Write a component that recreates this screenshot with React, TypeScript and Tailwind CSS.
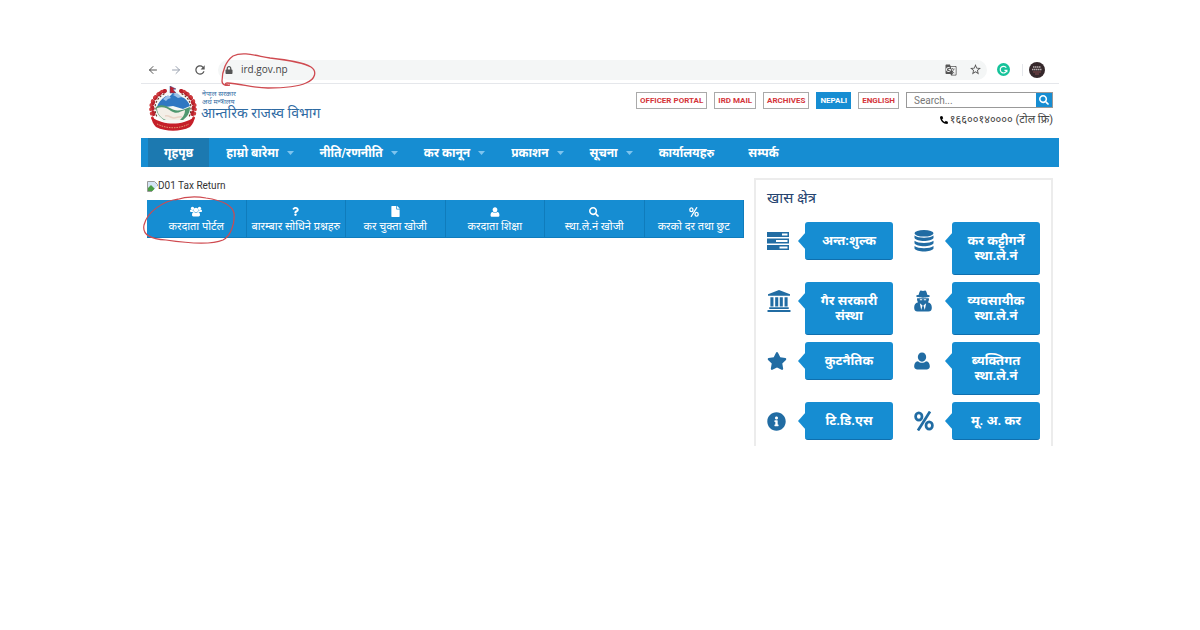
import type { ReactNode } from 'react'
import { ArrowLeft, ArrowRight } from 'lucide-react'
import { FaFile, FaInfoCircle, FaLock, FaPhoneAlt, FaQuestion, FaSearch, FaStar } from 'react-icons/fa'
import { MdGTranslate, MdRefresh, MdStarBorder } from 'react-icons/md'

const portalLinks = [
  { label: 'OFFICER PORTAL' },
  { label: 'IRD MAIL' },
  { label: 'ARCHIVES' },
  { label: 'NEPALI', active: true },
  { label: 'ENGLISH' },
]

const menu = [
  { label: 'गृहपृष्ठ', active: true },
  { label: 'हाम्रो बारेमा', children: true },
  { label: 'नीति/रणनीति', children: true },
  { label: 'कर कानून', children: true },
  { label: 'प्रकाशन', children: true },
  { label: 'सूचना', children: true },
  { label: 'कार्यालयहरु' },
  { label: 'सम्पर्क' },
]

function UserIcon({ className }: { className?: string }) {
  return (
    <svg viewBox="0 0 20 22" className={className} fill="currentColor" aria-hidden="true">
      <path d="M10 .5c3 0 5.200 2.300 5.200 5.600S13 12 10 12 4.800 9.400 4.800 6.100 7 .5 10 .5z" />
      <path d="M5 11.200c3 2.700 7 2.700 10 0 3.500.4 4.800 3.300 4.800 6.800 0 2-1.300 3.500-3.500 3.500H3.700C1.500 21.500.2 20 .2 18c0-3.500 1.300-6.400 4.800-6.800z" />
    </svg>
  )
}

function UsersIcon({ className }: { className?: string }) {
  return (
    <svg viewBox="0 0 24 20" className={className} fill="currentColor" aria-hidden="true">
      <circle cx="5" cy="3.800" r="3.300" />
      <circle cx="19" cy="3.800" r="3.300" />
      <circle cx="12" cy="7" r="4.600" />
      <path d="M2 6.500c2 1 3.500 1 5 .3 0 2 .6 3.300 1.500 4.200H2C.8 11 0 10.300 0 9c0-1.500.5-2.500 2-2.500zM22 6.500c-2 1-3.500 1-5 .3 0 2-.6 3.300-1.500 4.200H22c1.200 0 2-.7 2-2 0-1.500-.5-2.500-2-2.500z" />
      <path d="M8 11c2.500 1.700 5.500 1.700 8 0 3 .3 4 2.500 4 6 0 1.700-1 2.800-2.800 2.800H6.800C5 19.800 4 18.700 4 17c0-3.500 1-5.700 4-6z" />
    </svg>
  )
}

function UniversityIcon({ className }: { className?: string }) {
  return (
    <svg viewBox="0 0 24 23" className={className} fill="currentColor" aria-hidden="true">
      <path d="m12 0 11.500 4.500V6H.5V4.500zM3 7.500h3.200v9.800H3zM8 7.500h3.200v9.800H8zM12.800 7.500H16v9.800h-3.200zM17.800 7.500H21v9.800h-3.200zM1.800 18h20.400v1.800H1.800zM0 20.800h24V23H0z" />
    </svg>
  )
}

function PercentIcon({ className }: { className?: string }) {
  return (
    <svg viewBox="0 0 20 20" className={className} fill="none" stroke="currentColor" strokeWidth="2.700" aria-hidden="true">
      <ellipse cx="4.800" cy="5.500" rx="3.200" ry="3.700" />
      <ellipse cx="15.200" cy="14.500" rx="3.200" ry="3.700" />
      <path d="M16 .5 4 19.500" />
    </svg>
  )
}

function TasksIcon({ className }: { className?: string }) {
  return (
    <svg viewBox="0 0 22 18" className={className} fill="currentColor" aria-hidden="true">
      <path fillRule="evenodd" d="M0 0h22v5H0zM15 1.500v2h5.500v-2zM0 6.500h22v5H0zM9 8v2h11.500V8zM0 13h22v5H0zM12.500 14.500v2h8v-2z" />
    </svg>
  )
}

function DatabaseIcon({ className }: { className?: string }) {
  return (
    <svg viewBox="0 0 20 22" className={className} fill="currentColor" aria-hidden="true">
      <ellipse cx="10" cy="3.300" rx="9.500" ry="3.300" />
      <path d="M.5 5.500c4 3 15 3 19 0v2.600c-2 4-17 4-19 0zM.5 10.700c4 3 15 3 19 0v2.600c-2 4-17 4-19 0zM.5 15.900c4 3 15 3 19 0v2.600c-2 4-17 4-19 0z" />
    </svg>
  )
}

function SecretIcon({ className }: { className?: string }) {
  return (
    <svg viewBox="0 0 20 24" className={className} fill="currentColor" aria-hidden="true">
      <path d="M7 .5c1-.6 2 .5 3 .5s2-1.100 3-.5c1 .7 1.300 2.700 1.700 4.500 1.800.4 3 .9 3 1.500 0 1-3.500 1.800-7.700 1.800S2.300 7.500 2.300 6.500c0-.6 1.200-1.100 3-1.500C5.700 3.200 6 1.200 7 .5z" />
      <path fillRule="evenodd" d="M3.500 9h13c.5 1.500-.3 3.300-1 4.500 3.200.8 4.300 3 4.300 6 0 2.500-1 4.300-3.800 4.300H4c-2.800 0-3.800-1.800-3.800-4.300 0-3 1.100-5.200 4.300-6C3.800 12.300 3 10.500 3.500 9zM6.500 10v1.200h2.600V10zm4.400 0v1.200h2.600V10zM6.500 14.500 8 22l1.500-5zm7 0-3 2.500 1.500 5z" />
    </svg>
  )
}

const tiles: { label: string; icon: ReactNode }[] = [
  { label: 'करदाता पोर्टल', icon: <UsersIcon className="h-[11px] w-3" /> },
  { label: 'बारम्बार सोधिने प्रश्नहरु', icon: <FaQuestion className="size-[9px]" /> },
  { label: 'कर चुक्ता खोजी', icon: <FaFile className="size-[11px]" /> },
  { label: 'करदाता शिक्षा', icon: <UserIcon className="size-[10px]" /> },
  { label: 'स्था.ले.नं खोजी', icon: <FaSearch className="size-[10px]" /> },
  { label: 'करको दर तथा छुट', icon: <PercentIcon className="size-[10px]" /> },
]

const areas: { lines: string[]; icon: ReactNode }[] = [
  { lines: ['अन्त:शुल्क'], icon: <TasksIcon className="h-[18px] w-[22px]" /> },
  { lines: ['कर कट्टीगर्ने', 'स्था.ले.नं'], icon: <DatabaseIcon className="h-[22px] w-5" /> },
  { lines: ['गैर सरकारी', 'संस्था'], icon: <UniversityIcon className="h-[22px] w-6" /> },
  { lines: ['व्यवसायीक', 'स्था.ले.नं'], icon: <SecretIcon className="h-[22px] w-[18px]" /> },
  { lines: ['कुटनैतिक'], icon: <FaStar className="size-5" /> },
  { lines: ['ब्यक्तिगत', 'स्था.ले.नं'], icon: <UserIcon className="h-5 w-4" /> },
  { lines: ['टि.डि.एस'], icon: <FaInfoCircle className="size-[19px]" /> },
  { lines: ['मू. अ. कर'], icon: <PercentIcon className="size-5" /> },
]

function Emblem() {
  return (
    <svg viewBox="0 0 50 46" className="h-[46px] w-[50px] shrink-0" role="img" aria-label="Government of Nepal">
      <ellipse cx="25" cy="21" rx="19" ry="17" fill="#f6f8f5" />
      <path d="M9 21c1-4 4-8 9-11l3 1 4-4 6 3 5 2c3 2 5 5 6 8l-7 3-10-3-15 2z" fill="#2f78c2" />
      <path d="m15 13 5-4 3 3-3 1-2 2zM25 9l4-2 5 4-4 1-3-2z" fill="#9cc2e8" />
      <path d="M8 21c5-3 9-2 14 1s9 4 20-1c0 6-3 10-7 13H16c-4-3-8-7-8-13z" fill="#4f9870" />
      <path d="M9 22c6-2 10 0 14 3 6 4 10 0 14-1 0 5-3 8-5 10H18c-5-2-9-6-9-12z" fill="#f3efe7" />
      <path d="M17 30c4-1 6 2 9 2s5-2 8-1" fill="none" stroke="#e9d3c6" strokeWidth="1.500" />
      <g fill="none" strokeLinecap="round">
        <path d="M17 5C5 9 1 21 7 31M33 5c12 4 16 16 10 26" stroke="#b9222c" strokeWidth="4" strokeDasharray="1.500 4" />
        <path d="M14 5C2 12 0 22 5 33M36 5c12 7 14 17 9 28" stroke="#cf3a3c" strokeWidth="2.500" strokeDasharray="1 3.500" />
        <path d="M16 8C7 13 5 22 9 31M34 8c9 5 11 14 7 23" stroke="#6d3c2c" strokeWidth="1.200" strokeDasharray="1 2.500" />
      </g>
      <path d="m22 0 6 3-3 .5L28 7h-6z" fill="#c4202b" stroke="#284c93" strokeWidth=".5" />
      <path d="M3 31c4 2 7 4 11 5 7 2 15 2 22 0 4-1 7-3 11-5-1 4-2 7-5 10-10 5-24 5-34 0-3-3-4-6-5-10z" fill="#c51f29" />
      <path d="M9 38c10 5 22 5 32 0" fill="none" stroke="#e39a72" strokeWidth="1" strokeDasharray="1.500 1" />
    </svg>
  )
}

function BrowserBar() {
  return (
    <div className="flex h-7 items-center border-b border-gray-200 pr-[14px] pl-[6px] text-[#555]">
      <div className="flex w-[60px] items-center justify-between">
        <button type="button" aria-label="Back"><ArrowLeft className="size-3" /></button>
        <button type="button" aria-label="Forward" className="text-gray-400"><ArrowRight className="size-3" /></button>
        <button type="button" aria-label="Reload"><MdRefresh className="size-[14px]" /></button>
      </div>
      <div className="relative ml-[11px] flex h-5 flex-1 items-center rounded-full bg-[#f4f6f6] pr-[5px] pl-[7px]">
        <FaLock className="size-2" />
        <input
          aria-label="Address"
          defaultValue="ird.gov.np"
          className="ml-2 min-w-0 flex-1 bg-transparent font-['Open_Sans',sans-serif] text-[10px] text-[#444] outline-none"
        />
        <button type="button" aria-label="Translate"><MdGTranslate className="size-3" /></button>
        <button type="button" aria-label="Bookmark" className="ml-3"><MdStarBorder className="size-[13px]" /></button>
        <svg viewBox="0 0 98 38" className="pointer-events-none absolute -top-[8px] left-[3px] h-[38px] w-[98px]" fill="none" stroke="#cf4a50" strokeWidth="1.300" aria-hidden="true">
          <path d="M9 33c-4 1-8 0-8-4C1 19 5 9 12 4c10-5 24 0 37 2 17 2 33 4 41 9 6 4 5 12-5 16-9 4-24 5-38 5-15 0-26-4-41-5-2 0-2 2 1 2" />
        </svg>
      </div>
      <svg viewBox="0 0 14 14" className="ml-[10px] size-[13px]" aria-label="Grammar" role="img">
        <circle cx="7" cy="7" r="7" fill="#15c39a" />
        <path d="M10 5a3.600 3.600 0 1 0 .6 3H8m2.600 0v2" fill="none" stroke="#fff" strokeWidth="1.300" />
      </svg>
      <span className="ml-3 h-3 w-px bg-gray-200" />
      <svg viewBox="0 0 16 16" className="ml-[6px] size-4" role="img" aria-label="Profile">
        <circle cx="8" cy="8" r="8" fill="#35282b" />
        <path d="M4 5h8M3 7.500h10" stroke="#b8aeb0" strokeWidth="1.300" strokeDasharray="1.500 .5" />
        <path d="M4 10h8M6 12h4" stroke="#80484c" strokeWidth="1" />
      </svg>
    </div>
  )
}

function Header() {
  return (
    <header className="flex min-h-[54px] justify-between pr-[6px] pl-[7px]">
      <a href="#home" className="flex items-start pt-[2px] text-[#2f6ba3]">
        <Emblem />
        <span className="ml-[3px] pt-1">
          <span className="ml-px block text-[7px] leading-[8px]">नेपाल सरकार</span>
          <span className="ml-px block text-[7px] leading-[8px]">अर्थ मन्त्रालय</span>
          <span className="block text-[14px] leading-[14px]">आन्तरिक राजस्व विभाग</span>
        </span>
      </a>
      <div className="pt-2">
        <div className="flex gap-[7px]">
          {portalLinks.map((link) => (
            <a
              key={link.label}
              href="#portal"
              className={
                link.active
                  ? 'flex h-[17px] items-center border border-[#168dd2] bg-[#168dd2] px-[3px] text-[8px] font-bold text-white'
                  : 'flex h-[17px] items-center border border-[#aaa] px-[3px] text-[8px] font-bold text-[#d4343a]'
              }
            >
              {link.label}
            </a>
          ))}
          <form className="flex h-4 w-[147px] border border-[#999]">
            <input aria-label="Search" placeholder="Search..." className="min-w-0 flex-1 px-[7px] text-[10px] outline-none placeholder:text-[#777]" />
            <button type="button" aria-label="Submit search" className="flex w-4 items-center justify-center bg-[#168dd2] text-white">
              <FaSearch className="size-[10px]" />
            </button>
          </form>
        </div>
        <p className="mt-[3px] flex items-center justify-end gap-[2px] text-[11px] leading-4 text-[#444]">
          <FaPhoneAlt className="size-2 text-black" />
          १६६००१४०००० (टोल फ्रि)
        </p>
      </div>
    </header>
  )
}

function Menu() {
  return (
    <nav className="flex h-[29px] bg-[#168dd2] pl-[7px] text-[12px] font-bold text-white">
      {menu.map((item) => (
        <a
          key={item.label}
          href="#menu"
          className={item.active ? 'flex items-center bg-[#1c79b0] px-4' : 'flex items-center px-[17px]'}
        >
          {item.label}
          {item.children && (
            <svg viewBox="0 0 7 4" className="-mr-2 ml-2 h-1 w-[7px]" fill="#7ec4ee" aria-hidden="true">
              <path d="M0 0h7L3.500 4z" />
            </svg>
          )}
        </a>
      ))}
    </nav>
  )
}

function QuickLinks() {
  return (
    <section className="min-w-0 flex-1 pt-[2px]">
      <div className="flex items-center text-[10px] leading-3 text-[#333]">
        <svg viewBox="0 0 11 11" className="size-[11px]" aria-hidden="true">
          <path d="M.5.500h7l3 3v7H.5z" fill="#d5e5f5" stroke="#999" />
          <path d="M1 10V7l3-3 4 4-2 2z" fill="#4b9d45" />
          <path d="m5 10.500 6-6v6.500H5z" fill="#fff" />
        </svg>
        D01 Tax Return
      </div>
      <div className="relative mt-2 grid grid-cols-6 bg-[#168dd2] text-white">
        {tiles.map((tile) => (
          <a key={tile.label} href="#tile" className="flex h-[38px] flex-col items-center border-r border-b border-[#0f7cbc] pt-[6px] text-[11px] whitespace-nowrap last:border-r-0">
            <span className="flex h-3 items-center">{tile.icon}</span>
            <span className="leading-5">{tile.label}</span>
          </a>
        ))}
        <svg viewBox="0 0 94 50" className="pointer-events-none absolute -top-[5px] -left-1 h-[50px] w-[94px]" fill="none" stroke="#cf4a50" strokeWidth="1.200" aria-hidden="true">
          <path d="M35 4C20 6 4 17 1 30c-2 10 7 14 22 15 20 3 45 5 57 0 8-4 12-17 11-27-2-9-15-13-28-15-10-2-22-1-31 2" />
        </svg>
      </div>
    </section>
  )
}

function SpecialAreas() {
  return (
    <aside className="w-[299px] shrink-0 border-2 border-b-0 border-[#ececec] px-[11px] pt-2 pb-[6px]">
      <h2 className="text-[15px] leading-5 text-[#25436f]">खास क्षेत्र</h2>
      <div className="mt-[14px] grid grid-cols-2 items-start gap-x-[21px] gap-y-[7px]">
        {areas.map((area) => (
          <a key={area.lines.join(' ')} href="#area" className="flex items-start">
            <span className="flex h-[38px] w-[38px] shrink-0 items-center text-[#216ca3]">{area.icon}</span>
            <span className="relative flex-1 rounded-[3px] border-b border-[#0f6fae] bg-[#168dd2] pt-[11px] pb-[11px] text-center text-[13px] leading-[15px] font-bold whitespace-nowrap text-white">
              <svg viewBox="0 0 8 18" className="absolute top-[10px] -left-[7px] h-[18px] w-2" fill="#168dd2" aria-hidden="true">
                <path d="M8 0v18L0 9z" />
              </svg>
              {area.lines.map((line) => (
                <span key={line} className="block">{line}</span>
              ))}
            </span>
          </a>
        ))}
      </div>
    </aside>
  )
}

export default function App() {
  return (
    <div className="min-h-screen bg-white pt-14 font-['Roboto','Noto_Sans',sans-serif]">
      <div className="mx-auto w-full max-w-[918px]">
        <BrowserBar />
        <Header />
        <Menu />
        <main className="flex items-start gap-[10px] pt-[11px] pr-[6px] pl-[6px]">
          <QuickLinks />
          <SpecialAreas />
        </main>
      </div>
    </div>
  )
}
